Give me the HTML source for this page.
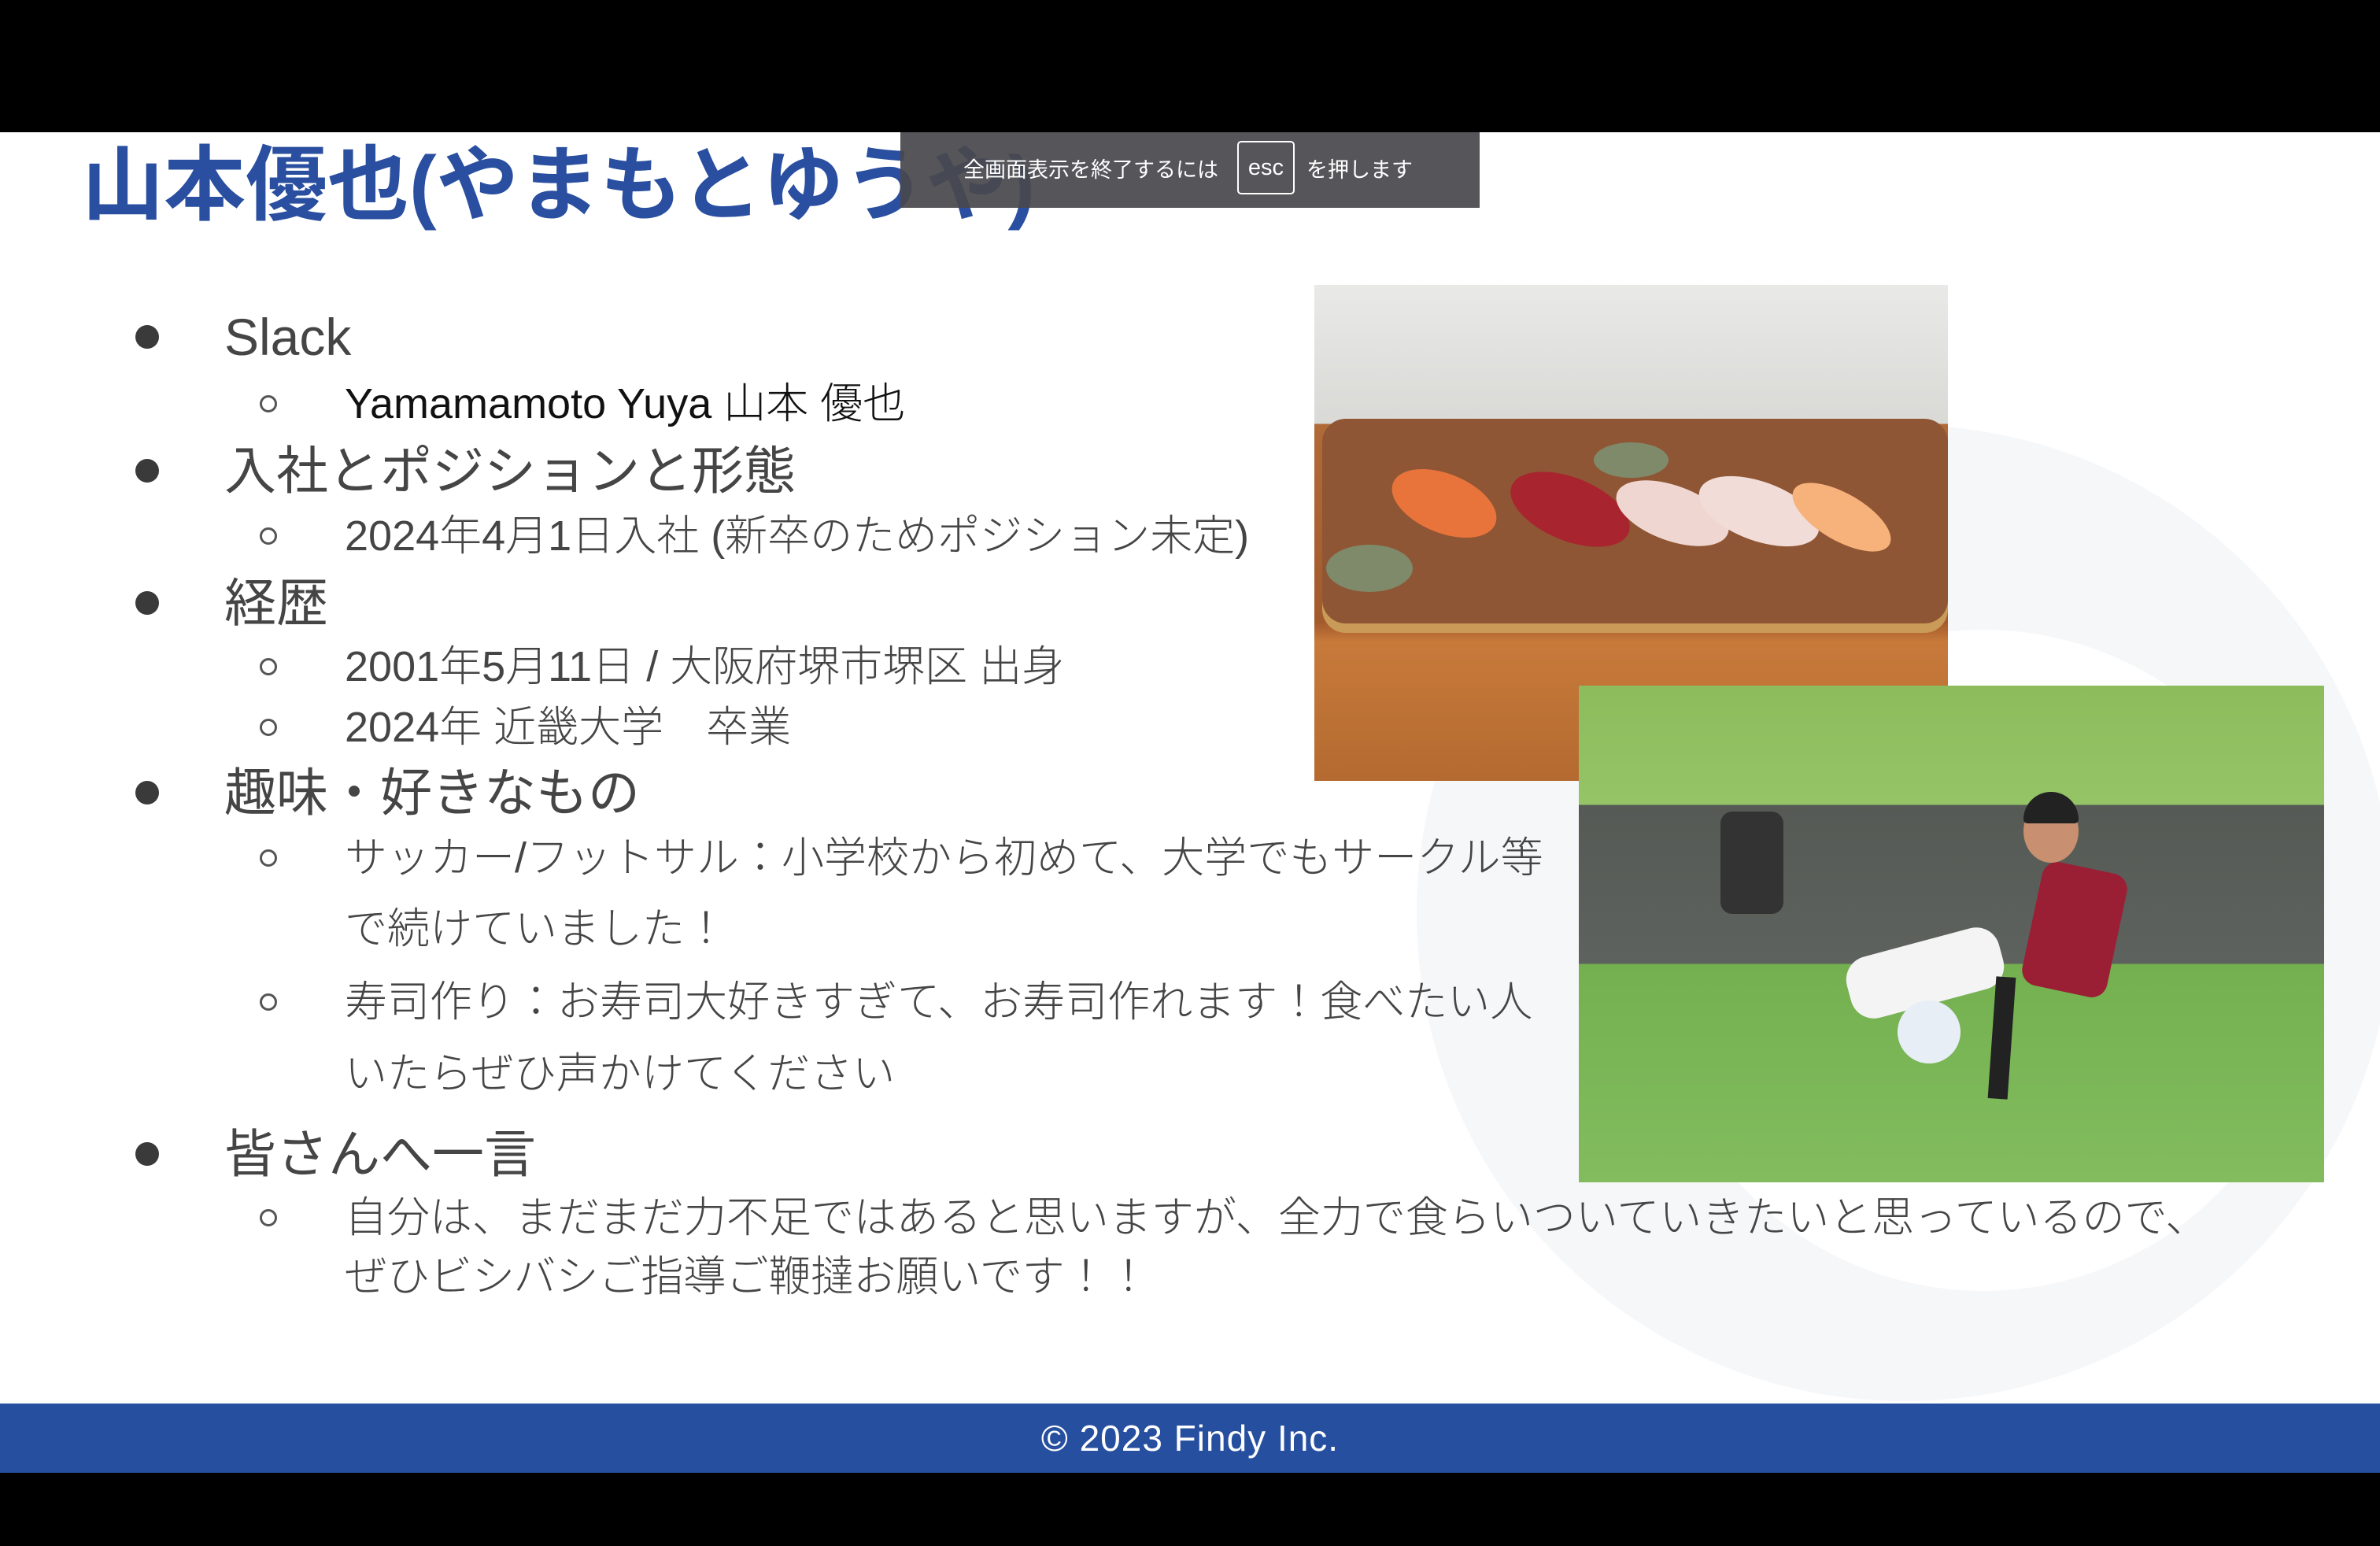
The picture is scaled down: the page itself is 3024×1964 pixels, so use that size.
<!DOCTYPE html>
<html><head><meta charset="utf-8">
<style>
html,body{margin:0;padding:0}
body{width:3024px;height:1964px;position:relative;overflow:hidden;background:#fff;font-family:"Liberation Sans","Noto Sans CJK JP",sans-serif;color:#454545}
.abs{position:absolute}
.l{position:absolute;height:90px;line-height:90px;white-space:nowrap}
.t{font-size:66px;left:285px}
.s{font-size:54px;left:438px;font-weight:300}
.b{position:absolute;left:172px;width:30px;height:30px;border-radius:50%;background:#3a3a3a}
.c{position:absolute;left:330px;width:22px;height:22px;border-radius:50%;border:3px solid #555;box-sizing:border-box}
</style></head><body>
<div class="abs" style="left:0;top:0;width:3024px;height:168px;background:#000"></div>
<!-- background ring -->
<div class="abs" style="left:1800px;top:540px;width:1240px;height:1240px;border-radius:50%;background:#f6f7f9"></div>
<div class="abs" style="left:2100px;top:800px;width:840px;height:840px;border-radius:50%;background:#fff"></div>

<div class="abs" style="left:104px;top:166px;font-size:104px;font-weight:bold;color:#2a4fa0;line-height:140px;white-space:nowrap">山本優也(やまもとゆうや)</div>

<div class="abs" style="left:1144px;top:168px;width:736px;height:96px;background:rgba(72,72,78,0.93)"></div>
<div class="abs" style="left:1224px;top:168px;height:96px;line-height:96px;color:#fff;font-size:27px;white-space:nowrap">全画面表示を終了するには</div>
<div class="abs" style="left:1572px;top:179px;width:73px;height:68px;border:2px solid #fff;border-radius:5px;box-sizing:border-box;color:#fff;font-size:29px;line-height:64px;text-align:center">esc</div>
<div class="abs" style="left:1660px;top:168px;height:96px;line-height:96px;color:#fff;font-size:27px;white-space:nowrap">を押します</div>

<div class="b" style="top:413px"></div><div class="l t" style="top:383px">Slack</div>
<div class="c" style="top:502px"></div><div class="l s" style="top:468px;color:#111">Yamamamoto Yuya 山本 優也</div>
<div class="b" style="top:583px"></div><div class="l t" style="top:553px">入社とポジションと形態</div>
<div class="c" style="top:670px"></div><div class="l s" style="top:636px">2024年4月1日入社 (新卒のためポジション未定)</div>
<div class="b" style="top:751px"></div><div class="l t" style="top:721px">経歴</div>
<div class="c" style="top:836px"></div><div class="l s" style="top:802px">2001年5月11日 / 大阪府堺市堺区 出身</div>
<div class="c" style="top:913px"></div><div class="l s" style="top:879px">2024年 近畿大学　卒業</div>
<div class="b" style="top:992px"></div><div class="l t" style="top:962px">趣味・好きなもの</div>
<div class="c" style="top:1079px"></div><div class="l s" style="top:1045px">サッカー/フットサル：小学校から初めて、大学でもサークル等</div>
<div class="l s" style="top:1135px">で続けていました！</div>
<div class="c" style="top:1262px"></div><div class="l s" style="top:1228px">寿司作り：お寿司大好きすぎて、お寿司作れます！食べたい人</div>
<div class="l s" style="top:1319px">いたらぜひ声かけてください</div>
<div class="b" style="top:1451px"></div><div class="l t" style="top:1421px">皆さんへ一言</div>
<div class="c" style="top:1536px"></div><div class="l s" style="top:1502px">自分は、まだまだ力不足ではあると思いますが、全力で食らいついていきたいと思っているので、</div>
<div class="l s" style="top:1577px">ぜひビシバシご指導ご鞭撻お願いです！！</div>

<!-- sushi photo -->
<div class="abs" style="left:1670px;top:362px;width:805px;height:630px;overflow:hidden;background:linear-gradient(#e9e9e7,#d9d9d6 28%,#b06a38 28%,#a35a2c 68%,#c77a3a 72%,#b46a30 100%)">
 <div class="abs" style="left:10px;top:170px;width:795px;height:260px;background:#8e5634;border-radius:30px;box-shadow:0 12px 0 #c99a58"></div>
 <div class="abs" style="left:95px;top:240px;width:140px;height:75px;border-radius:50%;background:#e8743c;transform:rotate(22deg)"></div>
 <div class="abs" style="left:245px;top:245px;width:160px;height:80px;border-radius:50%;background:#a8242e;transform:rotate(22deg)"></div>
 <div class="abs" style="left:380px;top:255px;width:150px;height:70px;border-radius:50%;background:#f0d6d0;transform:rotate(20deg)"></div>
 <div class="abs" style="left:485px;top:250px;width:160px;height:75px;border-radius:50%;background:#f2dcd8;transform:rotate(20deg)"></div>
 <div class="abs" style="left:600px;top:265px;width:140px;height:60px;border-radius:50%;background:#f6b27a;transform:rotate(30deg)"></div>
 <div class="abs" style="left:15px;top:330px;width:110px;height:60px;border-radius:50%;background:#7f8a6a"></div>
 <div class="abs" style="left:355px;top:200px;width:95px;height:45px;border-radius:50%;background:#7f8a6a"></div>
</div>
<!-- soccer photo -->
<div class="abs" style="left:2006px;top:871px;width:947px;height:631px;overflow:hidden;background:linear-gradient(#8cbc5c,#94c466 24%,#555a55 24%,#5e625e 56%,#74b050 56%,#82bc5e 100%)">
 <div class="abs" style="left:575px;top:230px;width:110px;height:160px;background:#9a1f34;transform:rotate(12deg);border-radius:20px"></div>
 <div class="abs" style="left:565px;top:145px;width:70px;height:80px;background:#c89070;border-radius:50%"></div>
 <div class="abs" style="left:565px;top:135px;width:70px;height:40px;background:#222;border-radius:35px 35px 5px 5px"></div>
 <div class="abs" style="left:340px;top:325px;width:200px;height:80px;background:#f4f4f4;border-radius:30px;transform:rotate(-15deg)"></div>
 <div class="abs" style="left:525px;top:370px;width:25px;height:155px;background:#222;transform:rotate(4deg)"></div>
 <div class="abs" style="left:405px;top:400px;width:80px;height:80px;border-radius:50%;background:#e8eef6"></div>
 <div class="abs" style="left:180px;top:160px;width:80px;height:130px;background:#333;border-radius:15px"></div>
</div>

<div class="abs" style="left:0;top:1783px;width:3024px;height:88px;background:#274f9f;color:#fff;font-size:46px;line-height:88px;text-align:center;letter-spacing:1px">© 2023 Findy Inc.</div>
<div class="abs" style="left:0;top:1871px;width:3024px;height:93px;background:#000"></div>
</body></html>
